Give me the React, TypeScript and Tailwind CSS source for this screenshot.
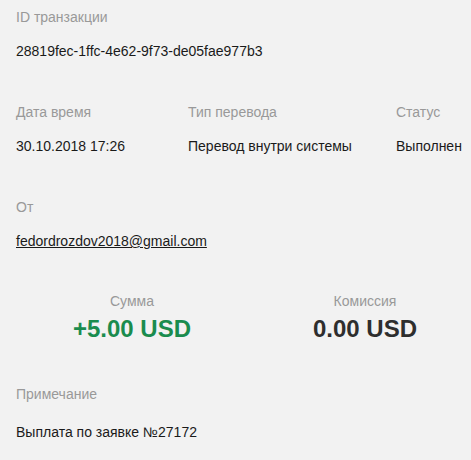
const label = "text-[14px] leading-[20px] text-[#999999]";
const value = "text-[14px] leading-[20px] text-[#1a1a1a]";

function Field({ title, children, gap = "mt-[14px]" }: { title: string; children: React.ReactNode; gap?: string }) {
  return (
    <div>
      <div className={label}>{title}</div>
      <div className={`${value} ${gap}`}>{children}</div>
    </div>
  );
}

export default function App() {
  return (
    <div
      className="min-h-[460px] w-[471px] overflow-hidden bg-[#f2f2f2] pl-[16px]"
      style={{ fontFamily: '"Liberation Sans", Arial, sans-serif' }}
    >
      <section className="h-[95px] pt-[7px]">
        <Field title="ID транзакции">28819fec-1ffc-4e62-9f73-de05fae977b3</Field>
      </section>

      <section className="flex h-[95px] pt-[7px]">
        <div className="w-[172px] shrink-0">
          <Field title="Дата время">30.10.2018 17:26</Field>
        </div>
        <div className="w-[208px] shrink-0">
          <Field title="Тип перевода">Перевод внутри системы</Field>
        </div>
        <div className="shrink-0">
          <Field title="Статус">Выполнен</Field>
        </div>
      </section>

      <section className="h-[95px] pt-[7px]">
        <Field title="От">
          <a className="underline">fedordrozdov2018@gmail.com</a>
        </Field>
      </section>

      <section className="flex h-[94px] pt-[6px]">
        <div className="flex w-[232px] shrink-0 flex-col items-center">
          <div className={label}>Сумма</div>
          <div className="mt-[4px] text-[24px] font-bold leading-[28px] text-[#1a8c4e]">+5.00 USD</div>
        </div>
        <div className="flex w-[234px] shrink-0 flex-col items-center">
          <div className={label}>Комиссия</div>
          <div className="mt-[4px] text-[24px] font-bold leading-[28px] text-[#2e2e2e]">0.00 USD</div>
        </div>
      </section>

      <section className="pt-[5px]">
        <Field title="Примечание" gap="mt-[18px]">Выплата по заявке №27172</Field>
      </section>
    </div>
  );
}
